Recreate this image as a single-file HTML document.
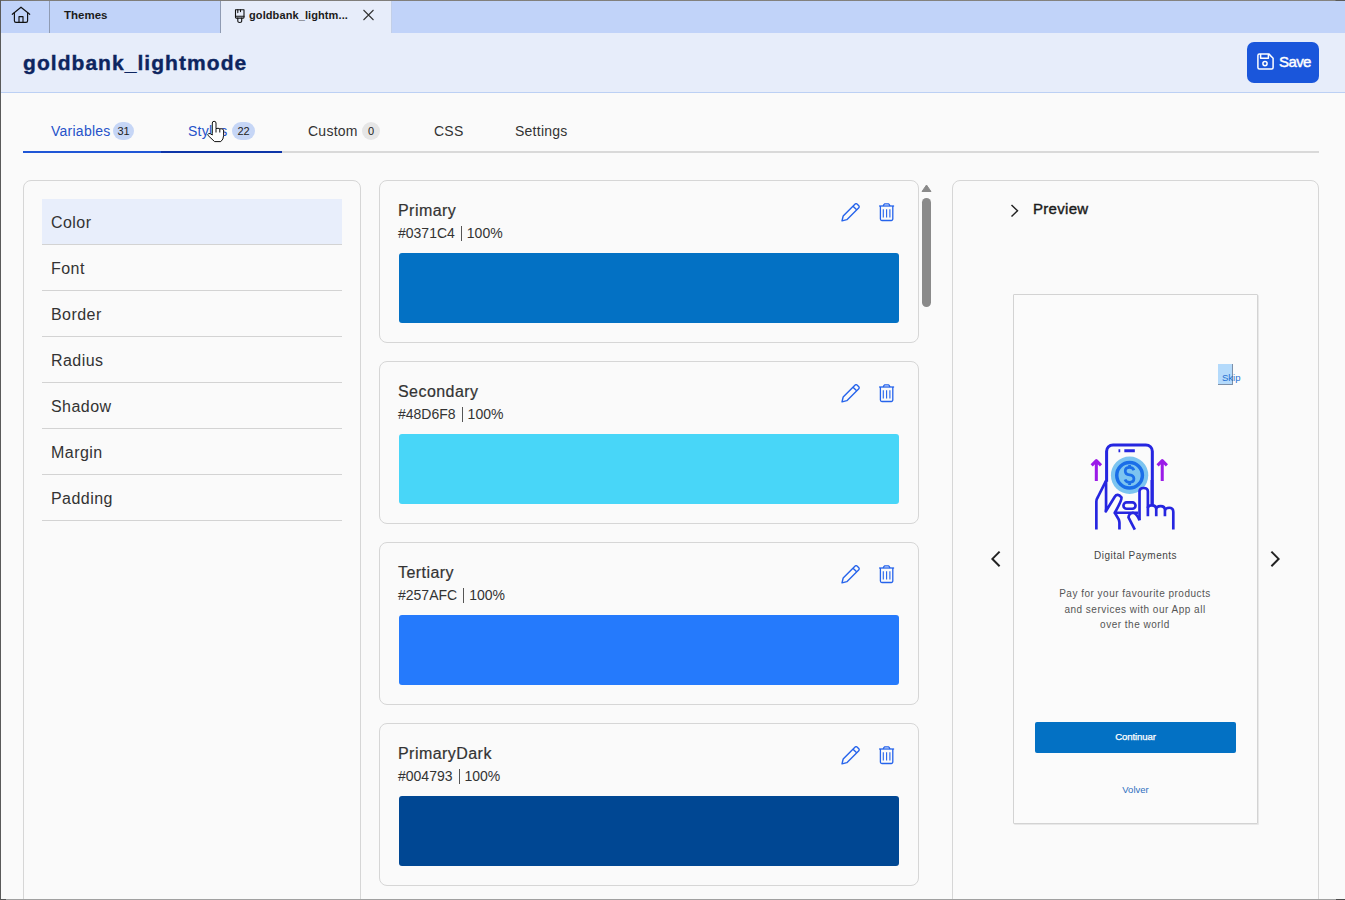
<!DOCTYPE html>
<html><head><meta charset="utf-8">
<style>
*{box-sizing:border-box;margin:0;padding:0}
html,body{width:1345px;height:900px;overflow:hidden;background:#fafafa;font-family:"Liberation Sans",sans-serif;color:#333}
.a{position:absolute}
#frameT{left:0;top:0;width:1345px;height:1px;background:linear-gradient(90deg,#6c6a66 0,#7f7d79 40px,#858380 1335px,#5c5b58 1336px)}
#frameL{left:0;top:0;width:1px;height:900px;background:#5a5a5a}
#frameB{left:0;top:899px;width:1345px;height:1px;background:linear-gradient(90deg,#555 0,#555 6px,#a0a0a0 6px,#a0a0a0 1336px,#4a4a4a 1336px)}
#tabbar{left:1px;top:1px;width:1344px;height:32px;background:#c1d3f9}
.sep{top:1px;width:1px;height:32px;background:#8f9bb3}
#activeTab{left:221px;top:1px;width:170px;height:32px;background:#e7edfa}
#header{left:1px;top:33px;width:1344px;height:59px;background:#e7edfa}
#headerLine{left:1px;top:92px;width:1344px;height:1px;background:#bcd0f4}
.tabtxt{font-size:11.5px;font-weight:bold;color:#1b1b1b;white-space:nowrap}
#title{left:23px;top:50.5px;font-size:21px;font-weight:bold;color:#0d2560;white-space:nowrap;letter-spacing:1.05px;-webkit-text-stroke:0.4px #0d2560}
#save{left:1247px;top:42px;width:72px;height:41px;background:#1a56db;border-radius:7px}
#saveTxt{left:1279px;top:53px;font-size:15px;letter-spacing:-0.6px;color:#fff;-webkit-text-stroke:0.45px #fff}
.nav{font-size:14px;white-space:nowrap;color:#333;letter-spacing:0.25px}
.badge{height:18px;border-radius:9px;background:#c6d6f6;font-size:11px;color:#222;text-align:center;line-height:18px}
.panel{border:1px solid #d6d6d6;border-radius:8px;background:#fafafa}
.item{left:42px;width:300px;height:46px;border-bottom:1px solid #d3d3d3;font-size:16px;letter-spacing:0.45px;line-height:47px;padding-left:9px;color:#333}
.card{left:379px;width:540px;height:163px;border:1px solid #d6d6d6;border-radius:8px;background:#fafafa}
.cname{left:18px;top:21px;font-size:16px;color:#333;white-space:nowrap;letter-spacing:0.45px;-webkit-text-stroke:0.2px #333}
.chex{left:18px;top:44px;font-size:14px;color:#333;white-space:nowrap}
.pipe{display:inline-block;width:1px;height:15px;background:#555;margin:0 5px 0 6px;vertical-align:-3px}
.swatch{left:19px;top:72px;width:500px;height:70px;border-radius:3px}
</style></head><body>
<div class="a" id="tabbar"></div>
<div class="a sep" style="left:49px"></div>
<div class="a sep" style="left:220px"></div>
<div class="a" id="activeTab"></div>
<div class="a sep" style="left:391px;background:#c2cfe8"></div>
<div class="a" id="frameT"></div>
<div class="a" id="frameL"></div>
<div class="a" id="header"></div>
<div class="a" id="headerLine"></div>

<!-- home icon -->
<svg class="a" style="left:0;top:0" width="45" height="33" viewBox="0 0 45 33" fill="none" stroke="#111" stroke-width="1.15" stroke-linejoin="round" stroke-linecap="round">
<path d="M12.3 14.3 L21 7.2 L29.7 14.3"/><path d="M14.4 12.6 V20.8 a1.6 1.6 0 0 0 1.6 1.6 H26 a1.6 1.6 0 0 0 1.6 -1.6 V12.6"/><path d="M19 22.3 V16.6 H23 V22.3"/>
</svg>
<div class="a tabtxt" style="left:64px;top:9px">Themes</div>
<!-- brush icon -->
<svg class="a" style="left:233px;top:7px" width="14" height="17" viewBox="0 0 14 17" fill="none" stroke="#111" stroke-width="1.1" stroke-linejoin="round" stroke-linecap="round">
<path d="M2.5 2.7 H11 V10.3 a0.8 0.8 0 0 1 -0.8 0.8 H3.3 a0.8 0.8 0 0 1 -0.8 -0.8 Z"/><path d="M2.5 9.2 H11"/><path d="M4.8 2.7 V5.6 M7.5 2.7 V4.6"/><path d="M4.8 11.1 V14.3 Q4.8 15.5 6.75 15.5 Q8.7 15.5 8.7 14.3 V11.1"/>
</svg>
<div class="a tabtxt" style="left:249px;top:9px;font-size:11px;letter-spacing:0.1px">goldbank_lightm...</div>
<svg class="a" style="left:362px;top:9px" width="13" height="12" viewBox="0 0 13 12" stroke="#333" stroke-width="1.1"><path d="M1.5 1 L11.5 11 M11.5 1 L1.5 11"/></svg>

<div class="a" id="title">goldbank_lightmode</div>
<div class="a" id="save"></div>
<svg class="a" style="left:1257px;top:53px" width="17" height="17" viewBox="0 0 17 17" fill="none" stroke="#fff" stroke-width="1.5" stroke-linejoin="round">
<path d="M0.9 2.4 a1.5 1.5 0 0 1 1.5 -1.5 H11.8 L16.1 5.2 V14.6 a1.5 1.5 0 0 1 -1.5 1.5 H2.4 a1.5 1.5 0 0 1 -1.5 -1.5 Z"/><path d="M3.6 1 V5.2 H11.4 V1"/><circle cx="8" cy="10.6" r="2.1"/>
</svg>
<div class="a" id="saveTxt">Save</div>

<!-- nav tabs -->
<div class="a nav" style="left:51px;top:123px;color:#2652c9">Variables</div>
<div class="a badge" style="left:113px;top:122px;width:21px">31</div>
<div class="a nav" style="left:188px;top:123px;color:#2652c9">Styles</div>
<div class="a badge" style="left:232px;top:122px;width:23px">22</div>
<div class="a nav" style="left:308px;top:123px">Custom</div>
<div class="a badge" style="left:362px;top:122px;width:18px;background:#e6e6e6">0</div>
<div class="a nav" style="left:434px;top:123px">CSS</div>
<div class="a nav" style="left:515px;top:123px">Settings</div>
<div class="a" style="left:23px;top:151px;width:1296px;height:2px;background:#d9d9d9"></div>
<div class="a" style="left:23px;top:151px;width:138px;height:2px;background:#1f56d6"></div>
<div class="a" style="left:161px;top:151px;width:121px;height:2px;background:#0d35a8"></div>

<svg class="a" style="left:206px;top:120px" width="20" height="23" viewBox="206 120 20 23"><path d="M212.3 133.5 V123 Q212.3 121.3 214.1 121.3 Q216 121.3 216 123 V128.6 Q218.2 127.8 219.8 128.8 Q222.2 128.3 223.6 129.8 V135.5 Q223.6 139.5 220.8 141.6 H214.6 L208.2 135.6 Q207.2 134.2 208.6 133.6 Q210 133 212.3 135 Z" fill="#fff" stroke="#111" stroke-width="1" stroke-linejoin="round"/><path d="M216 128.6 V132.5 M219.8 128.8 V132.5" stroke="#111" stroke-width="1"/></svg>
<!-- left panel -->
<div class="a panel" style="left:23px;top:180px;width:338px;height:760px"></div>
<div class="a item" style="top:199px;background:#e8eefb">Color</div>
<div class="a item" style="top:245px">Font</div>
<div class="a item" style="top:291px">Border</div>
<div class="a item" style="top:337px">Radius</div>
<div class="a item" style="top:383px">Shadow</div>
<div class="a item" style="top:429px">Margin</div>
<div class="a item" style="top:475px">Padding</div>

<!-- CARDS -->
<div class="a card" style="top:180px">
 <div class="a cname">Primary</div><div class="a chex">#0371C4<span class="pipe"></span>100%</div>
 <div class="a swatch" style="background:#0371c4"></div>
</div>
<div class="a card" style="top:361px">
 <div class="a cname">Secondary</div><div class="a chex">#48D6F8<span class="pipe"></span>100%</div>
 <div class="a swatch" style="background:#48d6f8"></div>
</div>
<div class="a card" style="top:542px">
 <div class="a cname">Tertiary</div><div class="a chex">#257AFC<span class="pipe"></span>100%</div>
 <div class="a swatch" style="background:#257afc"></div>
</div>
<div class="a card" style="top:723px">
 <div class="a cname">PrimaryDark</div><div class="a chex">#004793<span class="pipe"></span>100%</div>
 <div class="a swatch" style="background:#004793"></div>
</div>

<svg class="a" style="left:841px;top:203px" width="19" height="19"><g fill="none" stroke="#2563eb" stroke-width="1.3" stroke-linejoin="round" transform="translate(-0.6,-0.9) scale(1.07)">
   <path d="M1.5 17.5 L2.6 13 L13.8 1.8 a1.2 1.2 0 0 1 1.7 0 L17.2 3.5 a1.2 1.2 0 0 1 0 1.7 L6 16.4 Z"/><path d="M11.8 3.8 L15.2 7.2"/>
  </g></svg>
<svg class="a" style="left:879px;top:203px" width="16" height="19"><g fill="none" stroke="#2563eb" stroke-width="1.3" stroke-linejoin="round" transform="translate(-0.4,0)">
   <path d="M0.5 3 H15.5"/><path d="M4.6 3 L5.6 1.1 a0.5 0.5 0 0 1 0.45 -0.3 H9.95 a0.5 0.5 0 0 1 0.45 0.3 L11.4 3"/><path d="M1.8 3 V16 a1.5 1.5 0 0 0 1.5 1.5 H12.7 a1.5 1.5 0 0 0 1.5 -1.5 V3"/>
   <path d="M4.7 6.2 V14.5 M8 6.2 V14.5 M11.3 6.2 V14.5" stroke-width="1.1"/>
  </g></svg>
<svg class="a" style="left:841px;top:384px" width="19" height="19"><g fill="none" stroke="#2563eb" stroke-width="1.3" stroke-linejoin="round" transform="translate(-0.6,-0.9) scale(1.07)">
   <path d="M1.5 17.5 L2.6 13 L13.8 1.8 a1.2 1.2 0 0 1 1.7 0 L17.2 3.5 a1.2 1.2 0 0 1 0 1.7 L6 16.4 Z"/><path d="M11.8 3.8 L15.2 7.2"/>
  </g></svg>
<svg class="a" style="left:879px;top:384px" width="16" height="19"><g fill="none" stroke="#2563eb" stroke-width="1.3" stroke-linejoin="round" transform="translate(-0.4,0)">
   <path d="M0.5 3 H15.5"/><path d="M4.6 3 L5.6 1.1 a0.5 0.5 0 0 1 0.45 -0.3 H9.95 a0.5 0.5 0 0 1 0.45 0.3 L11.4 3"/><path d="M1.8 3 V16 a1.5 1.5 0 0 0 1.5 1.5 H12.7 a1.5 1.5 0 0 0 1.5 -1.5 V3"/>
   <path d="M4.7 6.2 V14.5 M8 6.2 V14.5 M11.3 6.2 V14.5" stroke-width="1.1"/>
  </g></svg>
<svg class="a" style="left:841px;top:565px" width="19" height="19"><g fill="none" stroke="#2563eb" stroke-width="1.3" stroke-linejoin="round" transform="translate(-0.6,-0.9) scale(1.07)">
   <path d="M1.5 17.5 L2.6 13 L13.8 1.8 a1.2 1.2 0 0 1 1.7 0 L17.2 3.5 a1.2 1.2 0 0 1 0 1.7 L6 16.4 Z"/><path d="M11.8 3.8 L15.2 7.2"/>
  </g></svg>
<svg class="a" style="left:879px;top:565px" width="16" height="19"><g fill="none" stroke="#2563eb" stroke-width="1.3" stroke-linejoin="round" transform="translate(-0.4,0)">
   <path d="M0.5 3 H15.5"/><path d="M4.6 3 L5.6 1.1 a0.5 0.5 0 0 1 0.45 -0.3 H9.95 a0.5 0.5 0 0 1 0.45 0.3 L11.4 3"/><path d="M1.8 3 V16 a1.5 1.5 0 0 0 1.5 1.5 H12.7 a1.5 1.5 0 0 0 1.5 -1.5 V3"/>
   <path d="M4.7 6.2 V14.5 M8 6.2 V14.5 M11.3 6.2 V14.5" stroke-width="1.1"/>
  </g></svg>
<svg class="a" style="left:841px;top:746px" width="19" height="19"><g fill="none" stroke="#2563eb" stroke-width="1.3" stroke-linejoin="round" transform="translate(-0.6,-0.9) scale(1.07)">
   <path d="M1.5 17.5 L2.6 13 L13.8 1.8 a1.2 1.2 0 0 1 1.7 0 L17.2 3.5 a1.2 1.2 0 0 1 0 1.7 L6 16.4 Z"/><path d="M11.8 3.8 L15.2 7.2"/>
  </g></svg>
<svg class="a" style="left:879px;top:746px" width="16" height="19"><g fill="none" stroke="#2563eb" stroke-width="1.3" stroke-linejoin="round" transform="translate(-0.4,0)">
   <path d="M0.5 3 H15.5"/><path d="M4.6 3 L5.6 1.1 a0.5 0.5 0 0 1 0.45 -0.3 H9.95 a0.5 0.5 0 0 1 0.45 0.3 L11.4 3"/><path d="M1.8 3 V16 a1.5 1.5 0 0 0 1.5 1.5 H12.7 a1.5 1.5 0 0 0 1.5 -1.5 V3"/>
   <path d="M4.7 6.2 V14.5 M8 6.2 V14.5 M11.3 6.2 V14.5" stroke-width="1.1"/>
  </g></svg>
<!-- scrollbar -->
<svg class="a" style="left:921px;top:184px" width="11" height="9"><path d="M1 7.5 L5.5 1 L10 7.5 Z" fill="#8a8a8a" stroke="#8a8a8a" stroke-width="1" stroke-linejoin="round"/></svg>
<div class="a" style="left:922px;top:198px;width:9px;height:109px;border-radius:4.5px;background:#8a8a8a"></div>

<!-- RIGHT -->
<div class="a panel" style="left:952px;top:180px;width:367px;height:760px"></div>
<svg class="a" style="left:1008px;top:202px" width="13" height="17" viewBox="0 0 13 17" fill="none" stroke="#222" stroke-width="1.45"><path d="M3.5 3 L9.5 8.8 L3.5 14.6"/></svg>
<div class="a" style="left:1033px;top:200px;font-size:15px;letter-spacing:0.3px;color:#1b1b1b;-webkit-text-stroke:0.4px #1b1b1b">Preview</div>
<svg class="a" style="left:986px;top:548px" width="20" height="22" viewBox="0 0 20 22" fill="none" stroke="#222" stroke-width="2"><path d="M13.6 3.6 L6.4 10.9 L13.6 18.2"/></svg>
<svg class="a" style="left:1265px;top:548px" width="20" height="22" viewBox="0 0 20 22" fill="none" stroke="#222" stroke-width="2"><path d="M6.4 3.6 L13.6 10.9 L6.4 18.2"/></svg>
<!-- phone -->
<div class="a" style="left:1013px;top:294px;width:245px;height:530px;border:1px solid #d3d3d3;border-radius:1px;background:#fbfbfb;box-shadow:1px 1px 0 #e8e8e8"></div>
<div class="a" style="left:1218px;top:364px;width:15px;height:21px;background:#b4dafb;border-right:1px solid #7c8fa8;border-bottom:1px solid #7c8fa8"></div>
<div class="a" style="left:1222px;top:372px;font-size:9.5px;color:#1f6fd0">Skip</div>
<svg class="a" style="left:1080px;top:435px" width="110" height="105" viewBox="0 0 943 900" fill="none" stroke-linecap="butt" stroke-linejoin="round">
 <g stroke="#2626e0" stroke-width="26">
  <path d="M228 400 V140 a55 55 0 0 1 55 -55 H565 a55 55 0 0 1 55 55 V600"/>
  <path d="M330 135 H345 M380 135 H470"/>
 </g>
 <circle cx="425" cy="345" r="160" fill="#7cc4f0"/>
 <circle cx="425" cy="345" r="110" stroke="#1a6ee8" stroke-width="30"/>
 <path d="M462 302 Q455 278 425 278 Q388 278 388 308 Q388 338 425 342 Q462 346 462 376 Q462 406 425 406 Q395 406 386 382 M425 258 V280 M425 404 V428" stroke="#1a6ee8" stroke-width="24"/>
 <g stroke="#9b1be8" stroke-width="26">
  <path d="M140 395 V220 M100 260 L140 220 L180 260"/>
  <path d="M705 395 V220 M665 260 L705 220 L745 260"/>
 </g>
</svg>
<svg class="a" style="left:1090px;top:480px" width="90" height="55" viewBox="0 0 1345 822" fill="none" stroke="#2626e0" stroke-width="40" stroke-linejoin="round">
 <path d="M95 740 V320 Q95 290 120 250 L235 20"/>
 <path d="M240 0 V430 L235 470 L370 250 Q410 190 470 260 Q480 300 370 490 H720"/>
 <path d="M370 490 L430 590 Q440 620 440 640 V740"/>
 <rect x="500" y="335" width="180" height="95" rx="47"/>
 <path d="M670 740 L575 560 Q580 500 640 490 Q700 500 740 600"/>
 <path d="M740 600 V170 Q740 120 800 120 Q865 120 865 170 V540"/>
 <path d="M925 0 V370"/>
 <path d="M865 420 Q865 380 925 380 Q990 380 990 440 V540 M990 440 Q990 390 1055 390 Q1120 390 1120 450 V540 M1120 470 Q1120 415 1185 415 Q1245 415 1245 480 V740"/>
</svg>
<div class="a" style="left:1094px;top:550px;font-size:10px;color:#444;white-space:nowrap;letter-spacing:0.5px">Digital Payments</div>
<div class="a" style="left:1040px;top:586px;width:190px;font-size:10px;line-height:15.5px;color:#555;text-align:center;letter-spacing:0.5px">Pay for your favourite products<br>and services with our App all<br>over the world</div>
<div class="a" style="left:1035px;top:722px;width:201px;height:31px;background:#0371c4;border-radius:2px"></div>
<div class="a" style="left:1035px;top:731px;width:201px;text-align:center;font-size:9.6px;letter-spacing:-0.1px;color:#fff;-webkit-text-stroke:0.25px #fff">Continuar</div>
<div class="a" style="left:1035px;top:784px;width:201px;text-align:center;font-size:9.5px;color:#2f6fc0">Volver</div>

<div class="a" id="frameB"></div>
</body></html>
